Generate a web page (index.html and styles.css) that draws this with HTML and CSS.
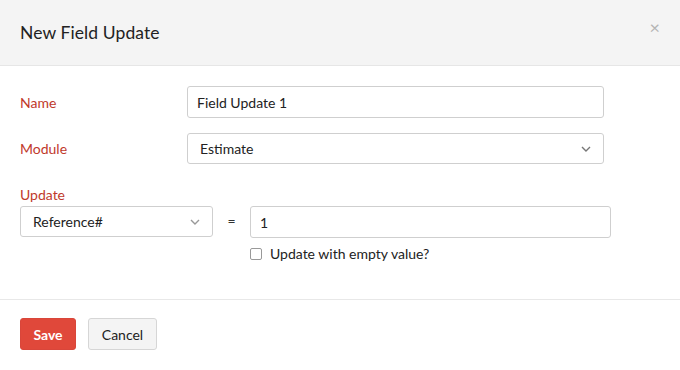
FILE: index.html
```html
<!DOCTYPE html>
<html>
<head>
<meta charset="utf-8">
<link rel="stylesheet" href="styles.css">
</head>
<body>
<div class="modal">
  <div class="header">
    <h1 class="title">New Field Update</h1>
    <span class="close">&times;</span>
  </div>
  <div class="body">
    <div class="row">
      <label class="label">Name</label>
      <div class="field wide text"><span>Field Update 1</span></div>
    </div>
    <div class="row">
      <label class="label">Module</label>
      <div class="field wide select"><span>Estimate</span>
        <svg class="chev" width="10" height="6" viewBox="0 0 10 6"><path d="M1 1l4 4 4-4" fill="none" stroke="#777" stroke-width="1.4"/></svg>
      </div>
    </div>
    <div class="update">
      <label class="label">Update</label>
      <div class="update-row">
        <div class="field small select"><span>Reference#</span>
          <svg class="chev" width="10" height="6" viewBox="0 0 10 6"><path d="M1 1l4 4 4-4" fill="none" stroke="#999" stroke-width="1.4"/></svg>
        </div>
        <span class="eq">=</span>
        <div class="value-col">
          <div class="field value text"><span>1</span></div>
          <div class="check"><span class="box"></span><span>Update with empty value?</span></div>
        </div>
      </div>
    </div>
  </div>
  <div class="footer">
    <button class="btn save">Save</button>
    <button class="btn cancel">Cancel</button>
  </div>
</div>
</body>
</html>
```
FILE: styles.css
```css
* { box-sizing: border-box; }
body { margin: 0; font-family: Lato, "Liberation Sans", sans-serif; font-size: 14px; color: #222; background: #fff; }
.modal { width: 680px; }
.header { height: 66px; background: #f4f4f4; border-bottom: 1px solid #e6e6e6; display: flex; align-items: center; justify-content: space-between; padding: 0 20px; }
.title { margin: 0; font-size: 17.5px; font-weight: 400; color: #222; padding-bottom: 1px; letter-spacing: 0.1px; }
.close { color: #b5b5b5; font-size: 18px; margin-top: -12px; margin-right: 0; }
.body { padding: 20px 20px 37px; border-bottom: 1px solid #e8e8e8; }
.row { display: flex; align-items: center; margin-bottom: 15px; }
.label { color: #c0392b; width: 167px; font-size: 14px; }
.field { height: 32px; border: 1px solid #cfcfcf; border-radius: 3px; display: flex; align-items: center; padding: 0 12px; justify-content: space-between; background: #fff; }
.field.text { padding-left: 9px; }
.wide { width: 417px; }
.wide.select { height: 31px; }
.update { margin-top: 22px; }
.update .label { display: block; margin-bottom: 3px; }
.update-row { display: flex; align-items: flex-start; }
.small { width: 193px; height: 31px; }
.eq { width: 37px; text-align: center; line-height: 30px; color: #333; }
.value-col { display: flex; flex-direction: column; }
.value { width: 361px; }
.check { display: flex; align-items: center; margin-top: 7px; gap: 8px; font-size: 14px; }
.box { width: 12px; height: 12px; border: 1px solid #999; border-radius: 2px; }
.footer { padding: 18px 20px; display: flex; gap: 12px; }
.btn { font-family: inherit; font-size: 14px; height: 32px; border-radius: 3px; padding: 0; }
.save { width: 56px; background: #e0483a; color: #fff; border: 1px solid #d9463a; font-weight: 700; }
.cancel { width: 69px; background: #f4f4f4; color: #222; border: 1px solid #d6d6d6; }
```
